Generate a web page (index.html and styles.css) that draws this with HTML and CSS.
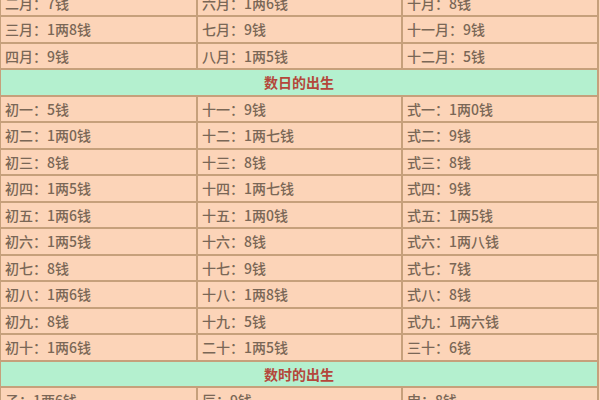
FILE: index.html
```html
<!DOCTYPE html>
<html lang="zh">
<head>
<meta charset="utf-8">
<link rel="stylesheet" href="styles.css">
</head>
<body>
<div class="frame">
<table class="weights">
  <colgroup><col class="c1"><col class="c2"><col class="c3"></colgroup>
  <tbody>
    <tr><td>二月：7钱</td><td>六月：1两6钱</td><td>十月：8钱</td></tr>
    <tr><td>三月：1两8钱</td><td>七月：9钱</td><td>十一月：9钱</td></tr>
    <tr><td>四月：9钱</td><td>八月：1两5钱</td><td>十二月：5钱</td></tr>
    <tr class="head"><td colspan="3">数日的出生</td></tr>
    <tr><td>初一：5钱</td><td>十一：9钱</td><td>式一：1两0钱</td></tr>
    <tr><td>初二：1两0钱</td><td>十二：1两七钱</td><td>式二：9钱</td></tr>
    <tr><td>初三：8钱</td><td>十三：8钱</td><td>式三：8钱</td></tr>
    <tr><td>初四：1两5钱</td><td>十四：1两七钱</td><td>式四：9钱</td></tr>
    <tr><td>初五：1两6钱</td><td>十五：1两0钱</td><td>式五：1两5钱</td></tr>
    <tr><td>初六：1两5钱</td><td>十六：8钱</td><td>式六：1两八钱</td></tr>
    <tr><td>初七：8钱</td><td>十七：9钱</td><td>式七：7钱</td></tr>
    <tr><td>初八：1两6钱</td><td>十八：1两8钱</td><td>式八：8钱</td></tr>
    <tr><td>初九：8钱</td><td>十九：5钱</td><td>式九：1两六钱</td></tr>
    <tr><td>初十：1两6钱</td><td>二十：1两5钱</td><td>三十：6钱</td></tr>
    <tr class="head"><td colspan="3">数时的出生</td></tr>
    <tr><td>子：1两6钱</td><td>辰：9钱</td><td>申：8钱</td></tr>
  </tbody>
</table>
</div>
</body>
</html>
```
FILE: styles.css
```css
html, body {
  margin: 0;
  padding: 0;
  background: #fcd6bb;
}
.frame {
  width: 600px;
  height: 400px;
  overflow: hidden;
}
.weights {
  border-collapse: collapse;
  table-layout: fixed;
  width: 598px;
  margin: -11.5px 0 0 -1px;
  font-family: "Noto Sans CJK SC", "Noto Sans", sans-serif;
  font-size: 14px;
  color: #7a6756;
}
.c1 { width: 197px; }
.c2 { width: 205px; }
.c3 { width: 196px; }
.weights td {
  height: 24.5px;
  padding: 0 0 0 4px;
  border: 2px solid #c6a07b;
  background: #fcd4b8;
  white-space: nowrap;
  line-height: 1;
  font-weight: 500;
}
.weights .head td {
  background: #b4f0cf;
  text-align: center;
  padding: 0;
  color: #b4473b;
  font-weight: 700;
}
```
